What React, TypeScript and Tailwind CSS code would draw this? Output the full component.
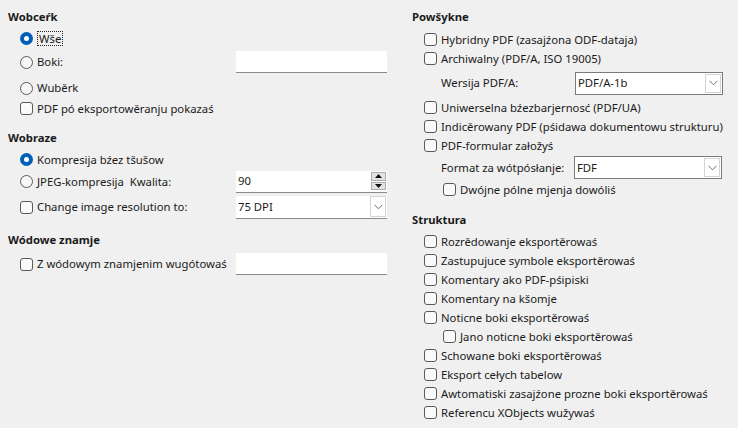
import React from "react";

function Radio({ checked }: { checked?: boolean }) {
  return checked ? (
    <span className="w-[13px] h-[13px] rounded-full bg-[#005fb8] flex items-center justify-center shrink-0">
      <span className="w-[5px] h-[5px] rounded-full bg-white" />
    </span>
  ) : (
    <span className="w-[13px] h-[13px] rounded-full border border-[#5a5a5a] bg-[#f7f7f7] shrink-0" />
  );
}

function Box() {
  return <span className="w-[13px] h-[13px] rounded-[3px] border border-[#5a5a5a] bg-[#fafafa] shrink-0" />;
}

function Chevron() {
  return (
    <svg width="9" height="6" viewBox="0 0 9 6" className="block">
      <polyline points="0.5,0.8 4.5,4.8 8.5,0.8" fill="none" stroke="#707070" strokeWidth="1" />
    </svg>
  );
}

function CheckRow({ label, indent = 12 }: { label: string; indent?: number }) {
  return (
    <div className="h-[19px] flex items-center gap-[4px]" style={{ paddingLeft: indent }}>
      <Box />
      <span className="whitespace-nowrap">{label}</span>
    </div>
  );
}

function FlatInput({ value = "" }: { value?: string }) {
  return (
    <div className="w-[151px] h-[22px] bg-white border-b border-[#8a8a8a] flex items-center px-[2px]">
      <span>{value}</span>
    </div>
  );
}

function FlatSelect({ value }: { value: string }) {
  return (
    <div className="w-[151px] h-[23px] bg-white border-b border-[#8a8a8a] flex items-center pl-[2px]">
      <span className="flex-1">{value}</span>
      <div className="w-[16px] h-[21px] mr-[1px] border border-[#d4d4d4] bg-white flex items-center justify-center">
        <Chevron />
      </div>
    </div>
  );
}

function BoxSelect({ value }: { value: string }) {
  return (
    <div className="w-[148px] h-[23px] bg-white border border-[#7a7a7a] flex items-center pl-[2px]">
      <span className="flex-1">{value}</span>
      <div className="w-[16px] h-[19px] mr-[1px] border border-[#d4d4d4] bg-white flex items-center justify-center">
        <Chevron />
      </div>
    </div>
  );
}

function Spin({ value }: { value: string }) {
  return (
    <div className="w-[151px] h-[22px] bg-white border-b border-[#8a8a8a] flex items-center pl-[2px]">
      <span className="flex-1">{value}</span>
      <div className="w-[15px] h-[18px] mr-[1px] flex flex-col gap-[1px]">
        <div className="flex-1 bg-[#e3e3e3] border border-[#adadad] flex items-center justify-center">
          <svg width="7" height="4" viewBox="0 0 7 4" className="block"><polygon points="0,4 7,4 3.5,0" fill="#111" /></svg>
        </div>
        <div className="flex-1 bg-[#e3e3e3] border border-[#adadad] flex items-center justify-center">
          <svg width="7" height="4" viewBox="0 0 7 4" className="block"><polygon points="0,0 7,0 3.5,4" fill="#111" /></svg>
        </div>
      </div>
    </div>
  );
}

function Header({ children }: { children: React.ReactNode }) {
  return <div className="h-[20px] flex items-center font-bold">{children}</div>;
}

export default function App() {
  return (
    <div className="w-[738px] h-[428px] bg-[#f0f0f0] text-[#1a1a1a] text-[11.3px] leading-none font-['Noto_Sans',sans-serif] flex overflow-hidden">
      {/* Left column */}
      <div className="w-[400px] pl-[8px] pt-[7px] flex flex-col">
        <Header>Wobceŕk</Header>
        <div className="h-[23px] pl-[12px] flex items-center gap-[4px]">
          <Radio checked />
          <span className="border border-dotted border-[#222] px-[1px] py-[1px]">Wše</span>
        </div>
        <div className="h-[24px] pl-[12px] flex items-center">
          <div className="w-[216px] flex items-center gap-[4px]">
            <Radio />
            <span>Boki:</span>
          </div>
          <FlatInput />
        </div>
        <div className="h-[22px] mt-[3px] pl-[12px] flex items-center gap-[4px]">
          <Radio />
          <span>Wuběrk</span>
        </div>
        <CheckRow label="PDF pó eksportowěranju pokazaś" />

        <div className="mt-[10px]">
          <Header>Wobraze</Header>
        </div>
        <div className="h-[21px] mt-[1px] pl-[12px] flex items-center gap-[4px]">
          <Radio checked />
          <span>Kompresija bźez tšušow</span>
        </div>
        <div className="h-[23px] pl-[12px] flex items-center">
          <div className="w-[216px] flex items-center gap-[4px]">
            <Radio />
            <span className="whitespace-pre">JPEG-kompresija  Kwalita:</span>
          </div>
          <Spin value="90" />
        </div>
        <div className="h-[24px] mt-[2px] pl-[12px] flex items-center">
          <div className="w-[216px] flex items-center gap-[4px]">
            <Box />
            <span>Change image resolution to:</span>
          </div>
          <FlatSelect value="75 DPI" />
        </div>

        <div className="mt-[11px]">
          <Header>Wódowe znamje</Header>
        </div>
        <div className="h-[22px] mt-[3px] pl-[12px] flex items-center">
          <div className="w-[216px] flex items-center gap-[4px]">
            <Box />
            <span className="whitespace-nowrap">Z wódowym znamjenim wugótowaś</span>
          </div>
          <FlatInput />
        </div>
      </div>

      {/* Right column */}
      <div className="flex-1 pl-[12px] pt-[7px] flex flex-col">
        <Header>Powšykne</Header>
        <div className="mt-[3px]">
          <CheckRow label="Hybridny PDF (zasajźona ODF-dataja)" />
        </div>
        <CheckRow label="Archiwalny (PDF/A, ISO 19005)" />
        <div className="h-[30px] pl-[29px] flex items-center">
          <span className="w-[134px]">Wersija PDF/A:</span>
          <BoxSelect value="PDF/A-1b" />
        </div>
        <CheckRow label="Uniwerselna bźezbarjernosć (PDF/UA)" />
        <CheckRow label="Indicěrowany PDF (pśidawa dokumentowu strukturu)" />
        <CheckRow label="PDF-formular załožyś" />
        <div className="h-[25px] pl-[29px] flex items-center">
          <span className="w-[133px]">Format za wótpósłanje:</span>
          <BoxSelect value="FDF" />
        </div>
        <CheckRow label="Dwójne pólne mjenja dowóliś" indent={31} />

        <div className="mt-[11px]">
          <Header>Struktura</Header>
        </div>
        <div className="mt-[2px] flex flex-col">
          <CheckRow label="Rozrědowanje eksportěrowaś" />
          <CheckRow label="Zastupujuce symbole eksportěrowaś" />
          <CheckRow label="Komentary ako PDF-pśipiski" />
          <CheckRow label="Komentary na kšomje" />
          <CheckRow label="Noticne boki eksportěrowaś" />
          <CheckRow label="Jano noticne boki eksportěrowaś" indent={31} />
          <CheckRow label="Schowane boki eksportěrowaś" />
          <CheckRow label="Eksport cełych tabelow" />
          <CheckRow label="Awtomatiski zasajźone prozne boki eksportěrowaś" />
          <CheckRow label="Referencu XObjects wužywaś" />
        </div>
      </div>
    </div>
  );
}
